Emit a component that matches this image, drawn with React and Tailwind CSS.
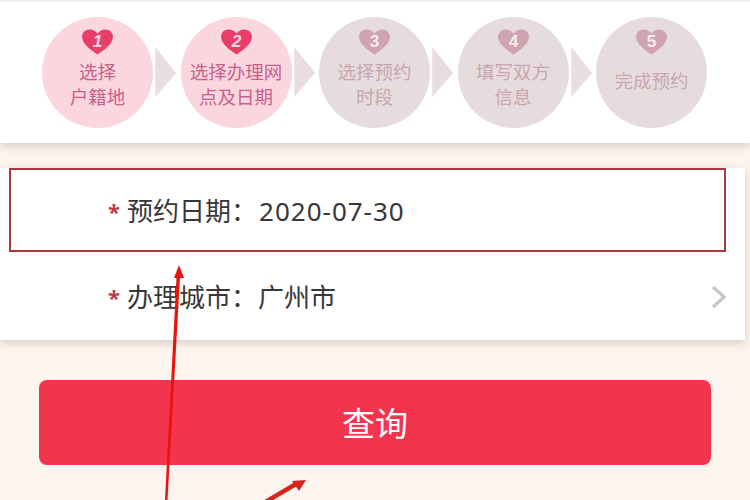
const steps = [
  { n: 1, lines: ['选择', '户籍地'], active: true },
  { n: 2, lines: ['选择办理网', '点及日期'], active: true },
  { n: 3, lines: ['选择预约', '时段'], active: false },
  { n: 4, lines: ['填写双方', '信息'], active: false },
  { n: 5, lines: ['完成预约'], active: false },
]

function Heart({ n, active }) {
  return (
    <svg width="33" height="26" viewBox="0 0 33 27" className="block shrink-0">
      <path
        d="M16.5 26.5C11 22.5 1 16.5 .5 8.5 .2 3.5 4 .5 8.500 .5c3.500 0 6.500 1.800 8 4.500 1.500-2.700 4.500-4.500 8-4.500 4.500 0 8.300 3 8 8-.5 8-10.500 14-16 18z"
        fill={active ? '#e83e68' : '#cfa3b0'}
      />
      <text x="16.500" y="19" textAnchor="middle" fontSize="18" fontWeight="700" fontStyle={active ? 'italic' : 'normal'} fontFamily="Liberation Sans, sans-serif" fill={active ? '#fbdbe3' : '#f7eaee'}>
        {n}
      </text>
    </svg>
  )
}

function Step({ step }) {
  return (
    <div className={`w-[111px] h-[111px] shrink-0 rounded-full flex flex-col items-center pt-[12px] ${step.active ? 'bg-[#fbd6df] text-[#c9608a]' : 'bg-[#e6dcde] text-[#c9a6af]'}`}>
      <Heart n={step.n} active={step.active} />
      <div className={`text-[18.5px] leading-[25px] text-center whitespace-nowrap ${step.lines.length === 1 ? 'mt-[13px]' : 'mt-[4px]'}`}>
        {step.lines.map((line) => (
          <div key={line}>{line}</div>
        ))}
      </div>
    </div>
  )
}

function Arrow() {
  return (
    <svg width="27.500" height="52" viewBox="0 0 27 52" className="block shrink-0">
      <path d="M2 0 L23 26 L2 50 Z" fill="#e8dde0" />
    </svg>
  )
}

export default function App() {
  return (
    <div className="relative w-[750px] h-[500px] overflow-hidden bg-[#fcf4ee] font-['Noto_Sans','Noto_Sans_CJK_SC',sans-serif]">
      {/* Steps */}
      <div className="h-[143px] bg-white border-t-2 border-[#f1eeee] shadow-[0_3px_8px_rgba(150,130,110,0.35)] flex items-start pt-[15px] pl-[42px]">
        {steps.map((step, i) => (
          <div key={step.n} className="flex items-center">
            <Step step={step} />
            {i < steps.length - 1 && <Arrow />}
          </div>
        ))}
      </div>

      {/* Form */}
      <div className="mt-[25px] h-[172px] mr-[5px] bg-white shadow-[0_3px_8px_rgba(150,130,110,0.35)]">
        <div className="ml-[9px] w-[717px] h-[84px] border-2 border-[#a8393f] flex items-center pl-[97px] pt-[3px] text-[26px] text-[#39363a]">
          <span className="text-[#c0394b] w-[19px] font-bold text-[22px]">*</span>
          <span>预约日期：</span>
          <span className="ml-[2px] tracking-[1px]">2020-07-30</span>
        </div>
        <div className="h-[88px] flex items-center pl-[108px] pr-[19px] pt-[2px] text-[26px] text-[#39363a]">
          <span className="text-[#c0394b] w-[19px] font-bold text-[22px]">*</span>
          <span>办理城市：</span>
          <span className="ml-[1px]">广州市</span>
          <svg width="15" height="24" viewBox="0 0 15 24" fill="none" stroke="#c9c9cb" strokeWidth="3.500" className="ml-auto">
            <path d="M2 2 L13 12 L2 22" />
          </svg>
        </div>
      </div>

      {/* Button */}
      <button className="block ml-[39px] mt-[40px] w-[672px] h-[85px] pt-[2px] rounded-[8px] bg-[#f2344f] text-white text-[33px]">
        查询
      </button>

      {/* Red annotation arrows */}
      <svg width="750" height="500" viewBox="0 0 750 500" className="absolute inset-0 pointer-events-none">
        <path d="M165 500 L167.500 500 L180 277 L176.500 277 Z" fill="#e8150f" />
        <path d="M179 265 L174 278 L184 278 Z" fill="#e8150f" />
        <path d="M262 504 L296 484" stroke="#d9241c" strokeWidth="4.500" />
        <path d="M306 480 L292 481 L299 491 Z" fill="#d9241c" />
      </svg>
    </div>
  )
}
